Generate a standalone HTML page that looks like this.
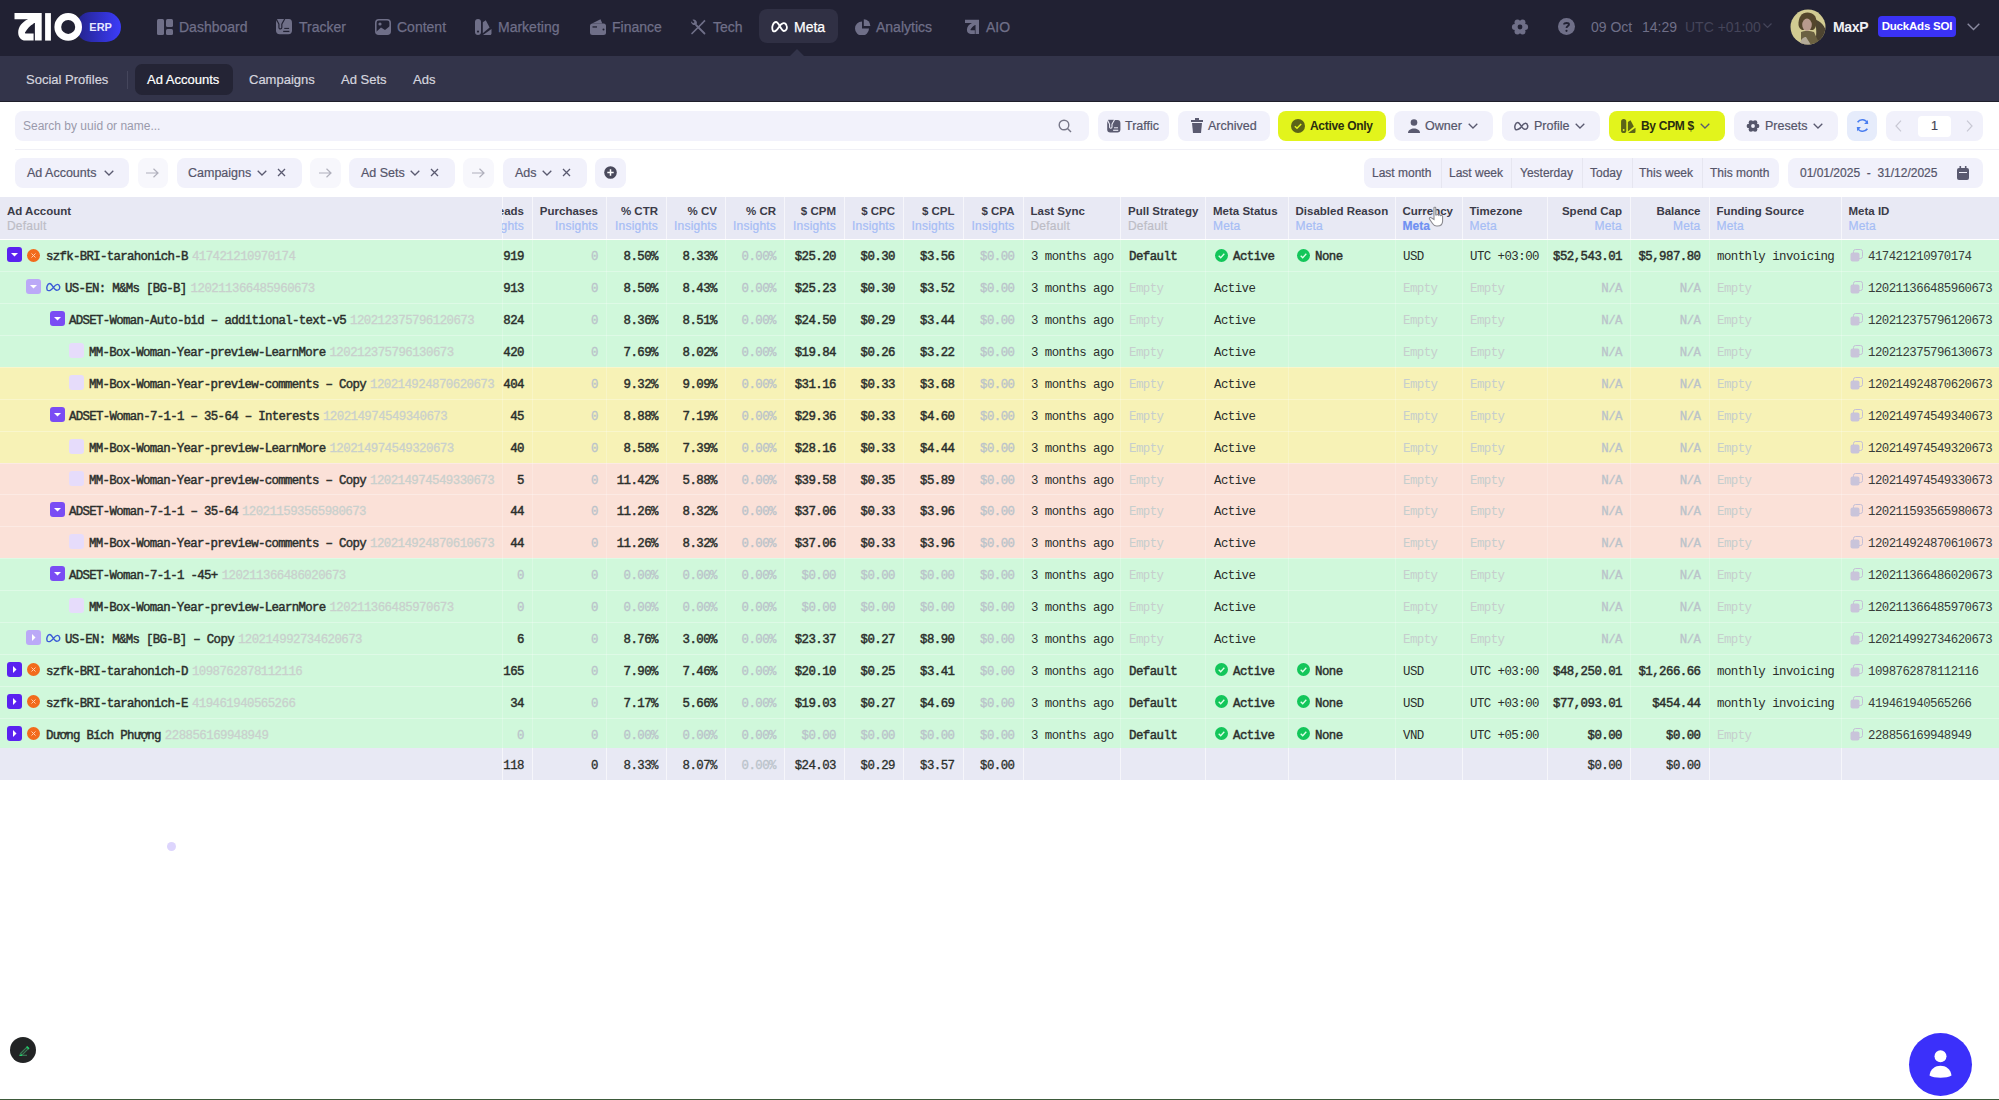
<!DOCTYPE html>
<html><head><meta charset="utf-8"><style>
*{box-sizing:border-box;margin:0;padding:0}
html,body{width:1999px;height:1100px;overflow:hidden;background:#ffffff;font-family:"Liberation Sans",sans-serif;position:relative}
.abs{position:absolute}
#top{left:0;top:0;width:1999px;height:56px;background:#212133}
#sub{left:0;top:56px;width:1999px;height:46px;background:#33344a}
.nav{position:absolute;top:0;height:56px;display:flex;align-items:center;color:#6f6f88;font-size:14px;white-space:nowrap}
.nav svg{position:absolute}
.subi{position:absolute;top:56px;height:46px;line-height:46px;color:#d7d7e2;font-size:13.5px;white-space:nowrap}
.btn{position:absolute;top:111px;height:30px;border-radius:8px;background:#f1f1fb;color:#55556a;font-size:12.5px;white-space:nowrap;line-height:30px}
.chip{position:absolute;top:158px;height:30px;border-radius:8px;background:#f1f1fb;color:#55556a;font-size:12.5px;white-space:nowrap;line-height:30px}
.t{position:absolute;white-space:nowrap}
.hdr{position:absolute;top:197px;height:42px;background:#e8e9f4}
.hl{position:absolute;top:197px;width:1px;height:42px;background:#f6f6fb}
.ht{position:absolute;top:204px;font-size:11.5px;line-height:14px;font-weight:bold;color:#3b3b48;white-space:nowrap}
.hs{position:absolute;top:219px;font-size:12px;line-height:14px;letter-spacing:0.2px;color:#a6bdf5;-webkit-text-stroke:0.2px #a6bdf5;white-space:nowrap}
.hs.g{color:#bdbdc6;-webkit-text-stroke:0.2px #bdbdc6}
.hs.hv{color:#6f90f2;-webkit-text-stroke:0.2px #6f90f2;font-weight:bold;letter-spacing:0}
.row{position:absolute;left:0;width:1999px}
.c{position:absolute;font-family:"Liberation Mono",monospace;font-size:12.4px;letter-spacing:-0.54px;white-space:nowrap;color:#2b2f2c}
.b{-webkit-text-stroke:0.45px #2b2f2c}
.m{-webkit-text-stroke:0.3px #2b2f2c}
.gr{color:#bac3ca;-webkit-text-stroke:0.3px #bac3ca}
.em{color:#c6cecd}
.vl{position:absolute;width:1px}
</style></head><body>
<div class="abs" id="top"></div>
<div class="abs" id="sub"></div>
<div class="abs" style="left:0;top:101px;width:1999px;height:1px;background:#1f1f2b"></div>
<svg class="abs" style="left:10px;top:8px" width="115" height="40" viewBox="0 0 115 40">
<defs><linearGradient id="erp" x1="0" x2="1"><stop offset="0" stop-color="#23238a"/><stop offset="1" stop-color="#3c3cfa"/></linearGradient></defs>
<rect x="66" y="4" width="45" height="30" rx="15" fill="url(#erp)"/>
<text x="79.3" y="22.8" font-family="Liberation Sans" font-weight="bold" font-size="11" fill="#e6e6ff">ERP</text>
<path d="M4.5 5.1 H31.7 V32.6 H24.9 V15 H23.6 V15.7 C20 17.5 17.5 20.3 15 24.6 C14.8 25.1 15.2 25.6 16 25.6 H23.6 V32.6 H15.5 C11 32.6 8.2 29 8.2 24.5 C8.2 19 12 14 18.1 11.3 H4.5 Z" fill="#fff"/>
<rect x="35.1" y="5.1" width="5.8" height="27.5" fill="#fff"/>
<circle cx="58.2" cy="18.9" r="10.4" fill="none" stroke="#fff" stroke-width="6.8"/>
</svg>
<svg class="abs" style="left:157px;top:19px" width="18" height="16" viewBox="0 0 18 16" fill="#6f6f88"><rect x="0" y="0" width="7" height="16" rx="1.5"/><rect x="9" y="0" width="7" height="8" rx="1.5"/><rect x="9" y="10" width="7" height="6" rx="1.5"/></svg>
<div class="t" style="left:179px;top:19px;font-size:14px;line-height:16px;color:#6f6f88;-webkit-text-stroke:0.25px #6f6f88">Dashboard</div>
<svg class="abs" style="left:276px;top:19px" width="18" height="16" viewBox="0 0 18 16" fill="#6f6f88"><g transform="translate(0 -1.2) scale(0.97)"><rect x="0" y="1.2" width="16.5" height="15.8" rx="3.8"/><path d="M0.2 0.2 H9.2 C9.2 1.8 6.8 4.2 6 6.6 V10 C6 10.9 5.2 11.5 4.5 11.5 C3.7 11.5 3 10.9 3 10 V6.6 C2.4 4.6 0.2 2.2 0.2 0.2Z" stroke="#212133" stroke-width="1.2"/><rect x="8.5" y="10.4" width="5" height="1.1" fill="#212133"/><rect x="7.4" y="13.4" width="6.4" height="1.3" fill="#212133"/></g></svg>
<div class="t" style="left:299px;top:19px;font-size:14px;line-height:16px;color:#6f6f88;-webkit-text-stroke:0.25px #6f6f88">Tracker</div>
<svg class="abs" style="left:375px;top:19px" width="18" height="16" viewBox="0 0 18 16" fill="#6f6f88"><rect x="0.8" y="0.8" width="14.4" height="14.4" rx="3" fill="none" stroke="#6f6f88" stroke-width="1.6"/><circle cx="5" cy="5" r="1.6"/><path d="M1 13 L6 8.5 L10 11 L15 7 V15 H1Z"/></svg>
<div class="t" style="left:397px;top:19px;font-size:14px;line-height:16px;color:#6f6f88;-webkit-text-stroke:0.25px #6f6f88">Content</div>
<svg class="abs" style="left:475px;top:19px" width="18" height="16" viewBox="0 0 18 16" fill="#6f6f88"><rect x="0" y="0" width="6" height="16" rx="3"/><circle cx="3" cy="12.6" r="1.1" fill="#212133"/><path d="M7.8 3.3 L10.8 1.3 L14.6 8.6 L7.8 14.2Z"/><path d="M8 16 L16.5 10 V14.5 C16.5 15.4 15.9 16 15 16Z"/></svg>
<div class="t" style="left:498px;top:19px;font-size:14px;line-height:16px;color:#6f6f88;-webkit-text-stroke:0.25px #6f6f88">Marketing</div>
<svg class="abs" style="left:590px;top:19px" width="18" height="16" viewBox="0 0 18 16" fill="#6f6f88"><rect x="0" y="4.5" width="16" height="11.5" rx="2.5"/><path d="M2 4.5 L10.5 0.3 L12.3 4.5Z"/><rect x="2.5" y="7.3" width="4.5" height="1.3" fill="#212133"/><circle cx="13.5" cy="10.5" r="1" fill="#212133"/></svg>
<div class="t" style="left:612px;top:19px;font-size:14px;line-height:16px;color:#6f6f88;-webkit-text-stroke:0.25px #6f6f88">Finance</div>
<svg class="abs" style="left:690px;top:19px" width="18" height="16" viewBox="0 0 18 16" fill="#6f6f88"><path d="M2 14.5 L12.5 4" stroke="#6f6f88" stroke-width="1.7" stroke-linecap="round"/><path d="M11.3 4.3 L14.3 0.8 L15.6 2.1 L12.2 5.2Z"/><path d="M14.5 14.5 L6 6" stroke="#6f6f88" stroke-width="1.8" stroke-linecap="round"/><path d="M6.8 5 A3.4 3.4 0 0 1 1 2.2 L3.2 4.3 L4.6 3 L2.4 0.8 A3.4 3.4 0 0 1 6.8 5Z"/></svg>
<div class="t" style="left:713px;top:19px;font-size:14px;line-height:16px;color:#6f6f88;-webkit-text-stroke:0.25px #6f6f88">Tech</div>
<div class="abs" style="left:759px;top:9px;width:79px;height:34px;border-radius:8px;background:#303044"></div>
<svg class="abs" style="left:789px;top:49px" width="16" height="8"><path d="M0 8 L8 0 L16 8Z" fill="#33344a"/></svg>
<svg class="abs" style="left:771px;top:19px" width="18" height="16" viewBox="0 0 18 16" fill="#ffffff"><path d="M2 12 C0 8 2.5 3 5 3 C8 3 10 12 13 12 C15.5 12 16.5 9 15.5 6.5 C14.5 3 11 3 8 8 C5.5 12 3.5 13 2 12Z" fill="none" stroke="#fff" stroke-width="1.8"/></svg>
<div class="t" style="left:794px;top:19px;font-size:14px;line-height:16px;color:#ffffff;-webkit-text-stroke:0.25px #ffffff">Meta</div>
<svg class="abs" style="left:855px;top:19px" width="18" height="16" viewBox="0 0 18 16" fill="#6f6f88"><path d="M7 2.5 A7 7 0 1 0 14 9.5 H7Z"/><path d="M8.8 0.3 A6.6 6.6 0 0 1 15.4 6.9 H8.8Z"/></svg>
<div class="t" style="left:876px;top:19px;font-size:14px;line-height:16px;color:#6f6f88;-webkit-text-stroke:0.25px #6f6f88">Analytics</div>
<svg class="abs" style="left:965px;top:19px" width="18" height="16" viewBox="0 0 18 16" fill="#6f6f88"><g transform="translate(0 0.8) scale(0.515) translate(-4.5 -5.1)"><path d="M4.5 5.1 H31.7 V32.6 H24.9 V15 H23.6 V15.7 C20 17.5 17.5 20.3 15 24.6 C14.8 25.1 15.2 25.6 16 25.6 H23.6 V32.6 H15.5 C11 32.6 8.2 29 8.2 24.5 C8.2 19 12 14 18.1 11.3 H4.5 Z"/></g></svg>
<div class="t" style="left:986px;top:19px;font-size:14px;line-height:16px;color:#6f6f88;-webkit-text-stroke:0.25px #6f6f88">AIO</div>
<svg class="abs" style="left:1511px;top:18px" width="18" height="18"><circle cx="9" cy="9" r="5.6" fill="#6f6f88"/><circle cx="14.20" cy="9.00" r="2.9" fill="#6f6f88"/><circle cx="11.60" cy="4.50" r="2.9" fill="#6f6f88"/><circle cx="6.40" cy="4.50" r="2.9" fill="#6f6f88"/><circle cx="3.80" cy="9.00" r="2.9" fill="#6f6f88"/><circle cx="6.40" cy="13.50" r="2.9" fill="#6f6f88"/><circle cx="11.60" cy="13.50" r="2.9" fill="#6f6f88"/><circle cx="9" cy="9" r="2.4" fill="#212133"/></svg>
<svg class="abs" style="left:1558px;top:18px" width="17" height="17" viewBox="0 0 17 17"><circle cx="8.5" cy="8.5" r="8.5" fill="#6f6f88"/><path d="M6 6.5 C6 4.5 11 4.5 11 6.5 C11 8 8.5 8 8.5 10" stroke="#212133" stroke-width="1.8" fill="none"/><circle cx="8.5" cy="12.8" r="1.1" fill="#212133"/></svg>
<div class="t" style="left:1591px;top:19px;font-size:14px;line-height:16px;color:#6f6f88">09 Oct</div>
<div class="t" style="left:1642px;top:19px;font-size:14px;line-height:16px;color:#6f6f88">14:29</div>
<div class="t" style="left:1685px;top:19px;font-size:14px;line-height:16px;color:#45455a">UTC +01:00</div>
<svg class="abs" style="left:1763px;top:23px" width="9" height="6"><path d="M0.5 0.5 L4.5 4.5 L8.5 0.5" stroke="#45455a" stroke-width="1.2" fill="none"/></svg>
<svg class="abs" style="left:1790px;top:9px" width="36" height="36" viewBox="0 0 36 36">
<defs><clipPath id="avc"><circle cx="18" cy="18" r="17.5"/></clipPath></defs>
<g clip-path="url(#avc)">
<rect width="36" height="36" fill="#d2cb92"/>
<path d="M0 22 C3 30 8 36 16 36 H0Z" fill="#bdb6a2"/>
<path d="M24 10 C31 12 36 18 36 24 V36 H24 C27 28 27 18 24 10Z" fill="#4d4431"/>
<path d="M8.5 16 C8 8 12 3.5 17.5 3.5 C23 3.5 26.5 7 26.5 13 C26.5 17 25 20 23 21 L12 21 C10 20 8.8 18 8.5 16Z" fill="#54462c"/>
<ellipse cx="17" cy="15.8" rx="4.8" ry="6.2" fill="#b89a8e"/>
<path d="M11 23 C13 21.5 21 21.5 24 23 L30 36 H11Z" fill="#6b6142"/>
<path d="M9 36 C11 30 13 28 16 28 L21 36Z" fill="#b3aa98"/>
</g></svg>
<div class="t" style="left:1833px;top:19px;font-size:14px;line-height:16px;color:#f0f0f5;font-weight:bold;letter-spacing:-0.3px">MaxP</div>
<div class="t" style="left:1878px;top:16px;width:78px;height:21px;border-radius:4px;background:#3a32f5;color:#fff;font-size:11.5px;font-weight:bold;line-height:21px;text-align:center;letter-spacing:-0.2px">DuckAds SOI</div>
<svg class="abs" style="left:1967px;top:23px" width="13" height="8"><path d="M0.7 0.7 L6.5 6.5 L12.3 0.7" stroke="#8a8aa0" stroke-width="1.4" fill="none"/></svg>
<div class="abs" style="left:135px;top:64px;width:98px;height:31px;border-radius:7px;background:#242435"></div>
<div class="abs" style="left:127px;top:71px;width:1px;height:18px;background:#45465c"></div>
<div class="t" style="left:26px;top:72px;font-size:13px;line-height:16px;color:#d5d5df;-webkit-text-stroke:0.2px #d5d5df">Social Profiles</div>
<div class="t" style="left:147px;top:72px;font-size:13px;line-height:16px;color:#ffffff;-webkit-text-stroke:0.2px #ffffff">Ad Accounts</div>
<div class="t" style="left:249px;top:72px;font-size:13px;line-height:16px;color:#d5d5df;-webkit-text-stroke:0.2px #d5d5df">Campaigns</div>
<div class="t" style="left:341px;top:72px;font-size:13px;line-height:16px;color:#d5d5df;-webkit-text-stroke:0.2px #d5d5df">Ad Sets</div>
<div class="t" style="left:413px;top:72px;font-size:13px;line-height:16px;color:#d5d5df;-webkit-text-stroke:0.2px #d5d5df">Ads</div>
<div class="abs" style="left:15px;top:111px;width:1074px;height:30px;border-radius:8px;background:#f2f2fb"></div>
<div class="t" style="left:23px;top:119px;font-size:12px;line-height:14px;color:#9a9aab">Search by uuid or name...</div>
<svg class="abs" style="left:1058px;top:119px" width="14" height="14"><circle cx="6" cy="6" r="4.8" stroke="#777788" stroke-width="1.4" fill="none"/><path d="M9.5 9.5 L13 13" stroke="#777788" stroke-width="1.4"/></svg>
<div class="abs" style="left:15px;top:149px;width:1984px;height:1px;background:#f0f0f6"></div>
<div class="abs" style="left:1098px;top:111px;width:71px;height:30px;border-radius:8px;background:#f1f1fb"></div>
<div class="abs" style="left:1178px;top:111px;width:92px;height:30px;border-radius:8px;background:#f1f1fb"></div>
<div class="abs" style="left:1278px;top:111px;width:108px;height:30px;border-radius:8px;background:#e2f41c"></div>
<div class="abs" style="left:1394px;top:111px;width:99px;height:30px;border-radius:8px;background:#f1f1fb"></div>
<div class="abs" style="left:1502px;top:111px;width:98px;height:30px;border-radius:8px;background:#f1f1fb"></div>
<div class="abs" style="left:1609px;top:111px;width:116px;height:30px;border-radius:8px;background:#e2f41c"></div>
<div class="abs" style="left:1734px;top:111px;width:104px;height:30px;border-radius:8px;background:#f1f1fb"></div>
<div class="abs" style="left:1847px;top:111px;width:30px;height:30px;border-radius:8px;background:#e6ecfb"></div>
<div class="abs" style="left:1886px;top:111px;width:97px;height:30px;border-radius:8px;background:#f1f1fb"></div>
<div class="abs" style="left:1918px;top:116px;width:33px;height:21px;border-radius:4px;background:#ffffff"></div>
<div class="t" style="left:1125px;top:119px;font-size:12.5px;line-height:14px;color:#55556a;-webkit-text-stroke:0.2px #55556a;">Traffic</div>
<div class="t" style="left:1208px;top:119px;font-size:12.5px;line-height:14px;color:#55556a;-webkit-text-stroke:0.2px #55556a;">Archived</div>
<div class="t" style="left:1310px;top:119px;font-size:12px;line-height:14px;color:#2a2e10;font-weight:bold;letter-spacing:-0.3px">Active Only</div>
<div class="t" style="left:1425px;top:119px;font-size:12.5px;line-height:14px;color:#55556a;-webkit-text-stroke:0.2px #55556a;">Owner</div>
<div class="t" style="left:1534px;top:119px;font-size:12.5px;line-height:14px;color:#55556a;-webkit-text-stroke:0.2px #55556a;">Profile</div>
<div class="t" style="left:1641px;top:119px;font-size:12px;line-height:14px;color:#2a2e10;font-weight:bold;letter-spacing:-0.3px">By CPM $</div>
<div class="t" style="left:1765px;top:119px;font-size:12.5px;line-height:14px;color:#55556a;-webkit-text-stroke:0.2px #55556a;">Presets</div>
<div class="t" style="left:1931px;top:119px;font-size:12.5px;line-height:14px;color:#444455;-webkit-text-stroke:0.2px #444455;">1</div>
<svg class="abs" style="left:1107px;top:119px" width="14" height="14" viewBox="0 0 17 17.5" fill="#5a5a70"><rect x="0" y="1.2" width="16.5" height="15.8" rx="3.8"/><path d="M0.2 0.2 H9.2 C9.2 1.8 6.8 4.2 6 6.6 V10 C6 10.9 5.2 11.5 4.5 11.5 C3.7 11.5 3 10.9 3 10 V6.6 C2.4 4.6 0.2 2.2 0.2 0.2Z" stroke="#f1f1fb" stroke-width="1.3"/><rect x="8.5" y="10.4" width="5" height="1.2" fill="#f1f1fb"/><rect x="7.4" y="13.4" width="6.4" height="1.4" fill="#f1f1fb"/></svg>
<svg class="abs" style="left:1191px;top:118px" width="12" height="15" viewBox="0 0 12 15" fill="#5a5a70"><rect x="0" y="2" width="12" height="2"/><rect x="4" y="0" width="4" height="2"/><path d="M1 5 H11 L10 15 H2Z"/></svg>
<svg class="abs" style="left:1291px;top:119px" width="14" height="14" viewBox="0 0 14 14"><circle cx="7" cy="7" r="7" fill="#5b6418"/><path d="M3.8 7.2 L6 9.3 L10.2 5" stroke="#e2f41c" stroke-width="1.5" fill="none"/></svg>
<svg class="abs" style="left:1408px;top:119px" width="12" height="14" viewBox="0 0 12 14" fill="#5a5a70"><circle cx="6" cy="3.5" r="3.3"/><path d="M0 14 C0 8 12 8 12 14Z"/></svg>
<svg class="abs" style="left:1514px;top:121px" width="15" height="10" viewBox="0 0 16 10"><path d="M1.5 8.5 C0 6 1.5 1.3 4 1.3 C6.5 1.3 8.5 8.5 11.5 8.5 C14 8.5 15 6.5 14.5 4.5 C14 1.5 11 1 8 5.5 C6 8.5 3 9.5 1.5 8.5Z" fill="none" stroke="#5a5a70" stroke-width="1.6"/></svg>
<svg class="abs" style="left:1621px;top:119px" width="15" height="14" viewBox="0 0 17 16" fill="#5b6418"><rect x="0" y="0" width="6" height="16" rx="3"/><circle cx="3" cy="12.6" r="1.1" fill="#e2f41c"/><path d="M7.8 3.3 L10.8 1.3 L14.6 8.6 L7.8 14.2Z"/><path d="M8 16 L16.5 10 V14.5 C16.5 15.4 15.9 16 15 16Z"/></svg>
<svg class="abs" style="left:1746px;top:119px" width="14" height="14"><circle cx="7" cy="7" r="4.4" fill="#55566a"/><circle cx="11.10" cy="7.00" r="2.3" fill="#55566a"/><circle cx="9.05" cy="3.45" r="2.3" fill="#55566a"/><circle cx="4.95" cy="3.45" r="2.3" fill="#55566a"/><circle cx="2.90" cy="7.00" r="2.3" fill="#55566a"/><circle cx="4.95" cy="10.55" r="2.3" fill="#55566a"/><circle cx="9.05" cy="10.55" r="2.3" fill="#55566a"/><circle cx="7" cy="7" r="1.9" fill="#f1f1fb"/></svg>
<svg class="abs" style="left:1468px;top:123px" width="10" height="7"><path d="M0.7 0.7 L5 5 L9.3 0.7" stroke="#5a5a70" stroke-width="1.3" fill="none"/></svg>
<svg class="abs" style="left:1575px;top:123px" width="10" height="7"><path d="M0.7 0.7 L5 5 L9.3 0.7" stroke="#5a5a70" stroke-width="1.3" fill="none"/></svg>
<svg class="abs" style="left:1700px;top:123px" width="10" height="7"><path d="M0.7 0.7 L5 5 L9.3 0.7" stroke="#5a5a70" stroke-width="1.3" fill="none"/></svg>
<svg class="abs" style="left:1813px;top:123px" width="10" height="7"><path d="M0.7 0.7 L5 5 L9.3 0.7" stroke="#5a5a70" stroke-width="1.3" fill="none"/></svg>
<svg class="abs" style="left:1855px;top:118px" width="15" height="15" viewBox="0 0 16 16"><path d="M13.5 6 A6 6 0 0 0 2.8 4.5 M2.5 10 A6 6 0 0 0 13.2 11.5" stroke="#4a7ef0" stroke-width="1.7" fill="none"/><path d="M13.8 2 V6.3 H9.7Z M2.2 14 V9.7 H6.3Z" fill="#4a7ef0"/></svg>
<svg class="abs" style="left:1895px;top:120px" width="7" height="12"><path d="M6 0.7 L1 6 L6 11.3" stroke="#c8c8d4" stroke-width="1.2" fill="none"/></svg>
<svg class="abs" style="left:1966px;top:120px" width="7" height="12"><path d="M1 0.7 L6 6 L1 11.3" stroke="#c8c8d4" stroke-width="1.2" fill="none"/></svg>
<div class="abs" style="left:15px;top:158px;width:114px;height:30px;border-radius:8px;background:#f1f1fb"></div>
<div class="abs" style="left:138px;top:158px;width:30px;height:30px;border-radius:8px;background:#f7f7fc"></div>
<div class="abs" style="left:177px;top:158px;width:125px;height:30px;border-radius:8px;background:#f1f1fb"></div>
<div class="abs" style="left:310px;top:158px;width:31px;height:30px;border-radius:8px;background:#f7f7fc"></div>
<div class="abs" style="left:349px;top:158px;width:106px;height:30px;border-radius:8px;background:#f1f1fb"></div>
<div class="abs" style="left:463px;top:158px;width:31px;height:30px;border-radius:8px;background:#f7f7fc"></div>
<div class="abs" style="left:503px;top:158px;width:84px;height:30px;border-radius:8px;background:#f1f1fb"></div>
<div class="abs" style="left:595px;top:158px;width:31px;height:30px;border-radius:8px;background:#f1f1fb"></div>
<div class="t" style="left:27px;top:166px;font-size:12.5px;line-height:14px;color:#55556a;-webkit-text-stroke:0.2px #55556a;">Ad Accounts</div>
<div class="t" style="left:188px;top:166px;font-size:12.5px;line-height:14px;color:#55556a;-webkit-text-stroke:0.2px #55556a;">Campaigns</div>
<div class="t" style="left:361px;top:166px;font-size:12.5px;line-height:14px;color:#55556a;-webkit-text-stroke:0.2px #55556a;">Ad Sets</div>
<div class="t" style="left:515px;top:166px;font-size:12.5px;line-height:14px;color:#55556a;-webkit-text-stroke:0.2px #55556a;">Ads</div>
<svg class="abs" style="left:104px;top:170px" width="10" height="7"><path d="M0.7 0.7 L5 5 L9.3 0.7" stroke="#5a5a70" stroke-width="1.3" fill="none"/></svg>
<svg class="abs" style="left:257px;top:170px" width="10" height="7"><path d="M0.7 0.7 L5 5 L9.3 0.7" stroke="#5a5a70" stroke-width="1.3" fill="none"/></svg>
<svg class="abs" style="left:410px;top:170px" width="10" height="7"><path d="M0.7 0.7 L5 5 L9.3 0.7" stroke="#5a5a70" stroke-width="1.3" fill="none"/></svg>
<svg class="abs" style="left:542px;top:170px" width="10" height="7"><path d="M0.7 0.7 L5 5 L9.3 0.7" stroke="#5a5a70" stroke-width="1.3" fill="none"/></svg>
<svg class="abs" style="left:277px;top:168px" width="9" height="9"><path d="M1 1 L8 8 M8 1 L1 8" stroke="#5a5a70" stroke-width="1.3"/></svg>
<svg class="abs" style="left:430px;top:168px" width="9" height="9"><path d="M1 1 L8 8 M8 1 L1 8" stroke="#5a5a70" stroke-width="1.3"/></svg>
<svg class="abs" style="left:562px;top:168px" width="9" height="9"><path d="M1 1 L8 8 M8 1 L1 8" stroke="#5a5a70" stroke-width="1.3"/></svg>
<svg class="abs" style="left:146px;top:168px" width="13" height="10"><path d="M0 5 H12 M7.5 0.8 L12 5 L7.5 9.2" stroke="#b0b0bc" stroke-width="1.2" fill="none"/></svg>
<svg class="abs" style="left:319px;top:168px" width="13" height="10"><path d="M0 5 H12 M7.5 0.8 L12 5 L7.5 9.2" stroke="#b0b0bc" stroke-width="1.2" fill="none"/></svg>
<svg class="abs" style="left:472px;top:168px" width="13" height="10"><path d="M0 5 H12 M7.5 0.8 L12 5 L7.5 9.2" stroke="#b0b0bc" stroke-width="1.2" fill="none"/></svg>
<svg class="abs" style="left:604px;top:166px" width="13" height="13"><circle cx="6.5" cy="6.5" r="6.3" fill="#4a4a5c"/><path d="M6.5 3.3 V9.7 M3.3 6.5 H9.7" stroke="#fff" stroke-width="1.5"/></svg>
<div class="abs" style="left:1364px;top:158px;width:415px;height:30px;border-radius:8px;background:#f1f1fb"></div>
<div class="abs" style="left:1441px;top:158px;width:1px;height:30px;background:#e6e6f0"></div>
<div class="abs" style="left:1511px;top:158px;width:1px;height:30px;background:#e6e6f0"></div>
<div class="abs" style="left:1582px;top:158px;width:1px;height:30px;background:#e6e6f0"></div>
<div class="abs" style="left:1632px;top:158px;width:1px;height:30px;background:#e6e6f0"></div>
<div class="abs" style="left:1702px;top:158px;width:1px;height:30px;background:#e6e6f0"></div>
<div class="t" style="left:1372px;top:166px;font-size:12px;line-height:14px;color:#55556a;-webkit-text-stroke:0.2px #55556a;">Last month</div>
<div class="t" style="left:1449px;top:166px;font-size:12px;line-height:14px;color:#55556a;-webkit-text-stroke:0.2px #55556a;">Last week</div>
<div class="t" style="left:1520px;top:166px;font-size:12px;line-height:14px;color:#55556a;-webkit-text-stroke:0.2px #55556a;">Yesterday</div>
<div class="t" style="left:1590px;top:166px;font-size:12px;line-height:14px;color:#55556a;-webkit-text-stroke:0.2px #55556a;">Today</div>
<div class="t" style="left:1639px;top:166px;font-size:12px;line-height:14px;color:#55556a;-webkit-text-stroke:0.2px #55556a;">This week</div>
<div class="t" style="left:1710px;top:166px;font-size:12px;line-height:14px;color:#55556a;-webkit-text-stroke:0.2px #55556a;">This month</div>
<div class="abs" style="left:1788px;top:158px;width:195px;height:30px;border-radius:8px;background:#f1f1fb"></div>
<div class="t" style="left:1800px;top:166px;font-size:12px;line-height:14px;color:#55556a;-webkit-text-stroke:0.2px #55556a;white-space:pre">01/01/2025  -  31/12/2025</div>
<svg class="abs" style="left:1957px;top:166px" width="12" height="14" viewBox="0 0 12 14" fill="#5a5a70"><rect x="0" y="2" width="12" height="12" rx="2"/><rect x="2.5" y="0" width="1.6" height="3"/><rect x="7.9" y="0" width="1.6" height="3"/><rect x="2" y="6" width="8" height="1" fill="#f1f1fb"/></svg>
<div class="hdr" style="left:0;width:1999px"></div>
<div class="ht" style="left:7px">Ad Account</div>
<div class="hs g" style="left:7px">Default</div>
<div class="hl" style="left:501.5px"></div>
<div class="abs" style="left:502px;top:197px;width:30px;height:42px;overflow:hidden"><div class="ht" style="right:8px;top:7px">Leads</div><div class="hs" style="right:8px;top:22px">Insights</div></div>
<div class="hl" style="left:532px"></div>
<div class="ht" style="right:1401px">Purchases</div>
<div class="hs" style="right:1401px">Insights</div>
<div class="hl" style="left:606px"></div>
<div class="ht" style="right:1341px">% CTR</div>
<div class="hs" style="right:1341px">Insights</div>
<div class="hl" style="left:666px"></div>
<div class="ht" style="right:1282px">% CV</div>
<div class="hs" style="right:1282px">Insights</div>
<div class="hl" style="left:725px"></div>
<div class="ht" style="right:1223px">% CR</div>
<div class="hs" style="right:1223px">Insights</div>
<div class="hl" style="left:784px"></div>
<div class="ht" style="right:1163px">$ CPM</div>
<div class="hs" style="right:1163px">Insights</div>
<div class="hl" style="left:844px"></div>
<div class="ht" style="right:1104px">$ CPC</div>
<div class="hs" style="right:1104px">Insights</div>
<div class="hl" style="left:903px"></div>
<div class="ht" style="right:1044.5px">$ CPL</div>
<div class="hs" style="right:1044.5px">Insights</div>
<div class="hl" style="left:962.5px"></div>
<div class="ht" style="right:984.5px">$ CPA</div>
<div class="hs" style="right:984.5px">Insights</div>
<div class="hl" style="left:1022.5px"></div>
<div class="ht" style="left:1030.5px">Last Sync</div>
<div class="hs g" style="left:1030.5px">Default</div>
<div class="hl" style="left:1120px"></div>
<div class="ht" style="left:1128px">Pull Strategy</div>
<div class="hs g" style="left:1128px">Default</div>
<div class="hl" style="left:1205px"></div>
<div class="ht" style="left:1213px">Meta Status</div>
<div class="hs" style="left:1213px">Meta</div>
<div class="hl" style="left:1287.5px"></div>
<div class="ht" style="left:1295.5px">Disabled Reason</div>
<div class="hs" style="left:1295.5px">Meta</div>
<div class="hl" style="left:1394.5px"></div>
<div class="ht" style="left:1402.5px">Currency</div>
<div class="hs hv" style="left:1402.5px">Meta</div>
<div class="hl" style="left:1461.5px"></div>
<div class="ht" style="left:1469.5px">Timezone</div>
<div class="hs" style="left:1469.5px">Meta</div>
<div class="hl" style="left:1546.5px"></div>
<div class="ht" style="right:377px">Spend Cap</div>
<div class="hs" style="right:377px">Meta</div>
<div class="hl" style="left:1630px"></div>
<div class="ht" style="right:298.5px">Balance</div>
<div class="hs" style="right:298.5px">Meta</div>
<div class="hl" style="left:1708.5px"></div>
<div class="ht" style="left:1716.5px">Funding Source</div>
<div class="hs" style="left:1716.5px">Meta</div>
<div class="hl" style="left:1840.5px"></div>
<div class="ht" style="left:1848.5px">Meta ID</div>
<div class="hs" style="left:1848.5px">Meta</div>
<div class="row" style="top:240px;height:31px;background:#d0f8db"></div>
<svg class="abs" style="left:7px;top:247.4px" width="15" height="15"><rect width="15" height="15" rx="3" fill="#5a22f0"/><path d="M4 6 H11 L7.5 9.5Z" fill="#fff"/></svg>
<svg class="abs" style="left:27px;top:248.9px" width="13" height="13"><circle cx="6.5" cy="6.5" r="6.5" fill="#f26b1c"/><path d="M4.5 4.5 L8.5 8.5 M8.5 4.5 L4.5 8.5" stroke="#ffd0b0" stroke-width="1"/></svg>
<div class="c b" style="left:46px;top:250.4px;line-height:15px"><span style="letter-spacing:-0.68px">szfk-BRI-tarahonich-B</span><span style="-webkit-text-stroke:0.3px #c9d0cd;color:#c9d0cd;margin-left:4px">417421210970174</span></div>
<div class="c b" style="right:1475.0px;top:250.4px;line-height:15px">919</div>
<div class="c gr" style="right:1401.0px;top:250.4px;line-height:15px">0</div>
<div class="c b" style="right:1341.0px;top:250.4px;line-height:15px">8.50%</div>
<div class="c b" style="right:1282.0px;top:250.4px;line-height:15px">8.33%</div>
<div class="c gr" style="right:1223.0px;top:250.4px;line-height:15px">0.00%</div>
<div class="c b" style="right:1163.0px;top:250.4px;line-height:15px">$25.20</div>
<div class="c b" style="right:1104.0px;top:250.4px;line-height:15px">$0.30</div>
<div class="c b" style="right:1044.5px;top:250.4px;line-height:15px">$3.56</div>
<div class="c gr" style="right:984.5px;top:250.4px;line-height:15px">$0.00</div>
<div class="c" style="left:1031px;top:250.4px;line-height:15px">3 months ago</div>
<div class="c b" style="left:1129px;top:250.4px;line-height:15px">Default</div>
<svg class="abs" style="left:1215px;top:248.9px" width="13" height="13"><circle cx="6.5" cy="6.5" r="6.5" fill="#13c65a"/><path d="M3.7 6.8 L5.7 8.7 L9.3 4.8" stroke="#e0ffe8" stroke-width="1.3" fill="none"/></svg>
<div class="c b" style="left:1233px;top:250.4px;line-height:15px">Active</div>
<svg class="abs" style="left:1297px;top:248.9px" width="13" height="13"><circle cx="6.5" cy="6.5" r="6.5" fill="#13c65a"/><path d="M3.7 6.8 L5.7 8.7 L9.3 4.8" stroke="#e0ffe8" stroke-width="1.3" fill="none"/></svg>
<div class="c b" style="left:1315px;top:250.4px;line-height:15px">None</div>
<div class="c" style="left:1403px;top:250.4px;line-height:15px">USD</div>
<div class="c" style="left:1470px;top:250.4px;line-height:15px">UTC +03:00</div>
<div class="c b" style="right:377px;top:250.4px;line-height:15px">$52,543.01</div>
<div class="c b" style="right:298.5px;top:250.4px;line-height:15px">$5,987.80</div>
<div class="c" style="left:1717px;top:250.4px;line-height:15px">monthly invoicing</div>
<svg class="abs" style="left:1850px;top:249.4px" width="13" height="13" viewBox="0 0 13 13"><rect x="3.5" y="0.5" width="9" height="9" rx="2" fill="none" stroke="#c4bfd6" stroke-width="1"/><rect x="0.5" y="3.5" width="9" height="9" rx="2" fill="#c9c4da"/></svg>
<div class="c" style="left:1868px;top:250.4px;line-height:15px;color:#383c3a">417421210970174</div>
<div class="row" style="top:271px;height:32px;background:#d0f8db"></div>
<svg class="abs" style="left:26px;top:279.3px" width="15" height="15"><rect width="15" height="15" rx="3" fill="#bba9f7"/><path d="M4 6 H11 L7.5 9.5Z" fill="#fff"/></svg>
<svg class="abs" style="left:46px;top:282.3px" width="15" height="10" viewBox="0 0 16 10"><path d="M1.5 8.5 C0 6 1.5 1.3 4 1.3 C6.5 1.3 8.5 8.5 11.5 8.5 C14 8.5 15 6.5 14.5 4.5 C14 1.5 11 1 8 5.5 C6 8.5 3 9.5 1.5 8.5Z" fill="none" stroke="#3a5ad6" stroke-width="1.5"/></svg>
<div class="c b" style="left:65px;top:282.3px;line-height:15px"><span style="letter-spacing:-0.68px">US-EN: M&amp;Ms [BG-B]</span><span style="-webkit-text-stroke:0.3px #c9d0cd;color:#c9d0cd;margin-left:4px">120211366485960673</span></div>
<div class="c b" style="right:1475.0px;top:282.3px;line-height:15px">913</div>
<div class="c gr" style="right:1401.0px;top:282.3px;line-height:15px">0</div>
<div class="c b" style="right:1341.0px;top:282.3px;line-height:15px">8.50%</div>
<div class="c b" style="right:1282.0px;top:282.3px;line-height:15px">8.43%</div>
<div class="c gr" style="right:1223.0px;top:282.3px;line-height:15px">0.00%</div>
<div class="c b" style="right:1163.0px;top:282.3px;line-height:15px">$25.23</div>
<div class="c b" style="right:1104.0px;top:282.3px;line-height:15px">$0.30</div>
<div class="c b" style="right:1044.5px;top:282.3px;line-height:15px">$3.52</div>
<div class="c gr" style="right:984.5px;top:282.3px;line-height:15px">$0.00</div>
<div class="c" style="left:1031px;top:282.3px;line-height:15px">3 months ago</div>
<div class="c em" style="left:1129px;top:282.3px;line-height:15px">Empty</div>
<div class="c" style="left:1214px;top:282.3px;line-height:15px">Active</div>
<div class="c em" style="left:1403px;top:282.3px;line-height:15px">Empty</div>
<div class="c em" style="left:1470px;top:282.3px;line-height:15px">Empty</div>
<div class="c gr" style="right:377px;top:282.3px;line-height:15px">N/A</div>
<div class="c gr" style="right:298.5px;top:282.3px;line-height:15px">N/A</div>
<div class="c em" style="left:1717px;top:282.3px;line-height:15px">Empty</div>
<svg class="abs" style="left:1850px;top:281.3px" width="13" height="13" viewBox="0 0 13 13"><rect x="3.5" y="0.5" width="9" height="9" rx="2" fill="none" stroke="#c4bfd6" stroke-width="1"/><rect x="0.5" y="3.5" width="9" height="9" rx="2" fill="#c9c4da"/></svg>
<div class="c" style="left:1868px;top:282.3px;line-height:15px;color:#383c3a">120211366485960673</div>
<div class="row" style="top:303px;height:32px;background:#d0f8db"></div>
<svg class="abs" style="left:50px;top:311.2px" width="15" height="15"><rect width="15" height="15" rx="3" fill="#7a4cf4"/><path d="M4 6 H11 L7.5 9.5Z" fill="#fff"/></svg>
<div class="c b" style="left:69px;top:314.2px;line-height:15px"><span style="letter-spacing:-0.68px">ADSET-Woman-Auto-bid – additional-text-v5</span><span style="-webkit-text-stroke:0.3px #c9d0cd;color:#c9d0cd;margin-left:4px">120212375796120673</span></div>
<div class="c b" style="right:1475.0px;top:314.2px;line-height:15px">824</div>
<div class="c gr" style="right:1401.0px;top:314.2px;line-height:15px">0</div>
<div class="c b" style="right:1341.0px;top:314.2px;line-height:15px">8.36%</div>
<div class="c b" style="right:1282.0px;top:314.2px;line-height:15px">8.51%</div>
<div class="c gr" style="right:1223.0px;top:314.2px;line-height:15px">0.00%</div>
<div class="c b" style="right:1163.0px;top:314.2px;line-height:15px">$24.50</div>
<div class="c b" style="right:1104.0px;top:314.2px;line-height:15px">$0.29</div>
<div class="c b" style="right:1044.5px;top:314.2px;line-height:15px">$3.44</div>
<div class="c gr" style="right:984.5px;top:314.2px;line-height:15px">$0.00</div>
<div class="c" style="left:1031px;top:314.2px;line-height:15px">3 months ago</div>
<div class="c em" style="left:1129px;top:314.2px;line-height:15px">Empty</div>
<div class="c" style="left:1214px;top:314.2px;line-height:15px">Active</div>
<div class="c em" style="left:1403px;top:314.2px;line-height:15px">Empty</div>
<div class="c em" style="left:1470px;top:314.2px;line-height:15px">Empty</div>
<div class="c gr" style="right:377px;top:314.2px;line-height:15px">N/A</div>
<div class="c gr" style="right:298.5px;top:314.2px;line-height:15px">N/A</div>
<div class="c em" style="left:1717px;top:314.2px;line-height:15px">Empty</div>
<svg class="abs" style="left:1850px;top:313.2px" width="13" height="13" viewBox="0 0 13 13"><rect x="3.5" y="0.5" width="9" height="9" rx="2" fill="none" stroke="#c4bfd6" stroke-width="1"/><rect x="0.5" y="3.5" width="9" height="9" rx="2" fill="#c9c4da"/></svg>
<div class="c" style="left:1868px;top:314.2px;line-height:15px;color:#383c3a">120212375796120673</div>
<div class="row" style="top:335px;height:32px;background:#d0f8db"></div>
<div class="abs" style="left:69px;top:343.0px;width:15px;height:15px;border-radius:3px;background:#e6dcfb"></div>
<div class="c b" style="left:89px;top:346.0px;line-height:15px"><span style="letter-spacing:-0.68px">MM-Box-Woman-Year-preview-LearnMore</span><span style="-webkit-text-stroke:0.3px #c9d0cd;color:#c9d0cd;margin-left:4px">120212375796130673</span></div>
<div class="c b" style="right:1475.0px;top:346.0px;line-height:15px">420</div>
<div class="c gr" style="right:1401.0px;top:346.0px;line-height:15px">0</div>
<div class="c b" style="right:1341.0px;top:346.0px;line-height:15px">7.69%</div>
<div class="c b" style="right:1282.0px;top:346.0px;line-height:15px">8.02%</div>
<div class="c gr" style="right:1223.0px;top:346.0px;line-height:15px">0.00%</div>
<div class="c b" style="right:1163.0px;top:346.0px;line-height:15px">$19.84</div>
<div class="c b" style="right:1104.0px;top:346.0px;line-height:15px">$0.26</div>
<div class="c b" style="right:1044.5px;top:346.0px;line-height:15px">$3.22</div>
<div class="c gr" style="right:984.5px;top:346.0px;line-height:15px">$0.00</div>
<div class="c" style="left:1031px;top:346.0px;line-height:15px">3 months ago</div>
<div class="c em" style="left:1129px;top:346.0px;line-height:15px">Empty</div>
<div class="c" style="left:1214px;top:346.0px;line-height:15px">Active</div>
<div class="c em" style="left:1403px;top:346.0px;line-height:15px">Empty</div>
<div class="c em" style="left:1470px;top:346.0px;line-height:15px">Empty</div>
<div class="c gr" style="right:377px;top:346.0px;line-height:15px">N/A</div>
<div class="c gr" style="right:298.5px;top:346.0px;line-height:15px">N/A</div>
<div class="c em" style="left:1717px;top:346.0px;line-height:15px">Empty</div>
<svg class="abs" style="left:1850px;top:345.0px" width="13" height="13" viewBox="0 0 13 13"><rect x="3.5" y="0.5" width="9" height="9" rx="2" fill="none" stroke="#c4bfd6" stroke-width="1"/><rect x="0.5" y="3.5" width="9" height="9" rx="2" fill="#c9c4da"/></svg>
<div class="c" style="left:1868px;top:346.0px;line-height:15px;color:#383c3a">120212375796130673</div>
<div class="row" style="top:367px;height:32px;background:#f7f2b6"></div>
<div class="abs" style="left:69px;top:374.9px;width:15px;height:15px;border-radius:3px;background:#e6dcfb"></div>
<div class="c b" style="left:89px;top:377.9px;line-height:15px"><span style="letter-spacing:-0.68px">MM-Box-Woman-Year-preview-comments – Copy</span><span style="-webkit-text-stroke:0.3px #c9d0cd;color:#c9d0cd;margin-left:4px">120214924870620673</span></div>
<div class="c b" style="right:1475.0px;top:377.9px;line-height:15px">404</div>
<div class="c gr" style="right:1401.0px;top:377.9px;line-height:15px">0</div>
<div class="c b" style="right:1341.0px;top:377.9px;line-height:15px">9.32%</div>
<div class="c b" style="right:1282.0px;top:377.9px;line-height:15px">9.09%</div>
<div class="c gr" style="right:1223.0px;top:377.9px;line-height:15px">0.00%</div>
<div class="c b" style="right:1163.0px;top:377.9px;line-height:15px">$31.16</div>
<div class="c b" style="right:1104.0px;top:377.9px;line-height:15px">$0.33</div>
<div class="c b" style="right:1044.5px;top:377.9px;line-height:15px">$3.68</div>
<div class="c gr" style="right:984.5px;top:377.9px;line-height:15px">$0.00</div>
<div class="c" style="left:1031px;top:377.9px;line-height:15px">3 months ago</div>
<div class="c em" style="left:1129px;top:377.9px;line-height:15px">Empty</div>
<div class="c" style="left:1214px;top:377.9px;line-height:15px">Active</div>
<div class="c em" style="left:1403px;top:377.9px;line-height:15px">Empty</div>
<div class="c em" style="left:1470px;top:377.9px;line-height:15px">Empty</div>
<div class="c gr" style="right:377px;top:377.9px;line-height:15px">N/A</div>
<div class="c gr" style="right:298.5px;top:377.9px;line-height:15px">N/A</div>
<div class="c em" style="left:1717px;top:377.9px;line-height:15px">Empty</div>
<svg class="abs" style="left:1850px;top:376.9px" width="13" height="13" viewBox="0 0 13 13"><rect x="3.5" y="0.5" width="9" height="9" rx="2" fill="none" stroke="#c4bfd6" stroke-width="1"/><rect x="0.5" y="3.5" width="9" height="9" rx="2" fill="#c9c4da"/></svg>
<div class="c" style="left:1868px;top:377.9px;line-height:15px;color:#383c3a">120214924870620673</div>
<div class="row" style="top:399px;height:32px;background:#f7f2b6"></div>
<svg class="abs" style="left:50px;top:406.8px" width="15" height="15"><rect width="15" height="15" rx="3" fill="#7a4cf4"/><path d="M4 6 H11 L7.5 9.5Z" fill="#fff"/></svg>
<div class="c b" style="left:69px;top:409.8px;line-height:15px"><span style="letter-spacing:-0.68px">ADSET-Woman-7-1-1 – 35-64 – Interests</span><span style="-webkit-text-stroke:0.3px #c9d0cd;color:#c9d0cd;margin-left:4px">120214974549340673</span></div>
<div class="c b" style="right:1475.0px;top:409.8px;line-height:15px">45</div>
<div class="c gr" style="right:1401.0px;top:409.8px;line-height:15px">0</div>
<div class="c b" style="right:1341.0px;top:409.8px;line-height:15px">8.88%</div>
<div class="c b" style="right:1282.0px;top:409.8px;line-height:15px">7.19%</div>
<div class="c gr" style="right:1223.0px;top:409.8px;line-height:15px">0.00%</div>
<div class="c b" style="right:1163.0px;top:409.8px;line-height:15px">$29.36</div>
<div class="c b" style="right:1104.0px;top:409.8px;line-height:15px">$0.33</div>
<div class="c b" style="right:1044.5px;top:409.8px;line-height:15px">$4.60</div>
<div class="c gr" style="right:984.5px;top:409.8px;line-height:15px">$0.00</div>
<div class="c" style="left:1031px;top:409.8px;line-height:15px">3 months ago</div>
<div class="c em" style="left:1129px;top:409.8px;line-height:15px">Empty</div>
<div class="c" style="left:1214px;top:409.8px;line-height:15px">Active</div>
<div class="c em" style="left:1403px;top:409.8px;line-height:15px">Empty</div>
<div class="c em" style="left:1470px;top:409.8px;line-height:15px">Empty</div>
<div class="c gr" style="right:377px;top:409.8px;line-height:15px">N/A</div>
<div class="c gr" style="right:298.5px;top:409.8px;line-height:15px">N/A</div>
<div class="c em" style="left:1717px;top:409.8px;line-height:15px">Empty</div>
<svg class="abs" style="left:1850px;top:408.8px" width="13" height="13" viewBox="0 0 13 13"><rect x="3.5" y="0.5" width="9" height="9" rx="2" fill="none" stroke="#c4bfd6" stroke-width="1"/><rect x="0.5" y="3.5" width="9" height="9" rx="2" fill="#c9c4da"/></svg>
<div class="c" style="left:1868px;top:409.8px;line-height:15px;color:#383c3a">120214974549340673</div>
<div class="row" style="top:431px;height:32px;background:#f7f2b6"></div>
<div class="abs" style="left:69px;top:438.7px;width:15px;height:15px;border-radius:3px;background:#e6dcfb"></div>
<div class="c b" style="left:89px;top:441.7px;line-height:15px"><span style="letter-spacing:-0.68px">MM-Box-Woman-Year-preview-LearnMore</span><span style="-webkit-text-stroke:0.3px #c9d0cd;color:#c9d0cd;margin-left:4px">120214974549320673</span></div>
<div class="c b" style="right:1475.0px;top:441.7px;line-height:15px">40</div>
<div class="c gr" style="right:1401.0px;top:441.7px;line-height:15px">0</div>
<div class="c b" style="right:1341.0px;top:441.7px;line-height:15px">8.58%</div>
<div class="c b" style="right:1282.0px;top:441.7px;line-height:15px">7.39%</div>
<div class="c gr" style="right:1223.0px;top:441.7px;line-height:15px">0.00%</div>
<div class="c b" style="right:1163.0px;top:441.7px;line-height:15px">$28.16</div>
<div class="c b" style="right:1104.0px;top:441.7px;line-height:15px">$0.33</div>
<div class="c b" style="right:1044.5px;top:441.7px;line-height:15px">$4.44</div>
<div class="c gr" style="right:984.5px;top:441.7px;line-height:15px">$0.00</div>
<div class="c" style="left:1031px;top:441.7px;line-height:15px">3 months ago</div>
<div class="c em" style="left:1129px;top:441.7px;line-height:15px">Empty</div>
<div class="c" style="left:1214px;top:441.7px;line-height:15px">Active</div>
<div class="c em" style="left:1403px;top:441.7px;line-height:15px">Empty</div>
<div class="c em" style="left:1470px;top:441.7px;line-height:15px">Empty</div>
<div class="c gr" style="right:377px;top:441.7px;line-height:15px">N/A</div>
<div class="c gr" style="right:298.5px;top:441.7px;line-height:15px">N/A</div>
<div class="c em" style="left:1717px;top:441.7px;line-height:15px">Empty</div>
<svg class="abs" style="left:1850px;top:440.7px" width="13" height="13" viewBox="0 0 13 13"><rect x="3.5" y="0.5" width="9" height="9" rx="2" fill="none" stroke="#c4bfd6" stroke-width="1"/><rect x="0.5" y="3.5" width="9" height="9" rx="2" fill="#c9c4da"/></svg>
<div class="c" style="left:1868px;top:441.7px;line-height:15px;color:#383c3a">120214974549320673</div>
<div class="row" style="top:463px;height:31px;background:#fbe1d8"></div>
<div class="abs" style="left:69px;top:470.5px;width:15px;height:15px;border-radius:3px;background:#e6dcfb"></div>
<div class="c b" style="left:89px;top:473.5px;line-height:15px"><span style="letter-spacing:-0.68px">MM-Box-Woman-Year-preview-comments – Copy</span><span style="-webkit-text-stroke:0.3px #c9d0cd;color:#c9d0cd;margin-left:4px">120214974549330673</span></div>
<div class="c b" style="right:1475.0px;top:473.5px;line-height:15px">5</div>
<div class="c gr" style="right:1401.0px;top:473.5px;line-height:15px">0</div>
<div class="c b" style="right:1341.0px;top:473.5px;line-height:15px">11.42%</div>
<div class="c b" style="right:1282.0px;top:473.5px;line-height:15px">5.88%</div>
<div class="c gr" style="right:1223.0px;top:473.5px;line-height:15px">0.00%</div>
<div class="c b" style="right:1163.0px;top:473.5px;line-height:15px">$39.58</div>
<div class="c b" style="right:1104.0px;top:473.5px;line-height:15px">$0.35</div>
<div class="c b" style="right:1044.5px;top:473.5px;line-height:15px">$5.89</div>
<div class="c gr" style="right:984.5px;top:473.5px;line-height:15px">$0.00</div>
<div class="c" style="left:1031px;top:473.5px;line-height:15px">3 months ago</div>
<div class="c em" style="left:1129px;top:473.5px;line-height:15px">Empty</div>
<div class="c" style="left:1214px;top:473.5px;line-height:15px">Active</div>
<div class="c em" style="left:1403px;top:473.5px;line-height:15px">Empty</div>
<div class="c em" style="left:1470px;top:473.5px;line-height:15px">Empty</div>
<div class="c gr" style="right:377px;top:473.5px;line-height:15px">N/A</div>
<div class="c gr" style="right:298.5px;top:473.5px;line-height:15px">N/A</div>
<div class="c em" style="left:1717px;top:473.5px;line-height:15px">Empty</div>
<svg class="abs" style="left:1850px;top:472.5px" width="13" height="13" viewBox="0 0 13 13"><rect x="3.5" y="0.5" width="9" height="9" rx="2" fill="none" stroke="#c4bfd6" stroke-width="1"/><rect x="0.5" y="3.5" width="9" height="9" rx="2" fill="#c9c4da"/></svg>
<div class="c" style="left:1868px;top:473.5px;line-height:15px;color:#383c3a">120214974549330673</div>
<div class="row" style="top:494px;height:32px;background:#fbe1d8"></div>
<svg class="abs" style="left:50px;top:502.4px" width="15" height="15"><rect width="15" height="15" rx="3" fill="#7a4cf4"/><path d="M4 6 H11 L7.5 9.5Z" fill="#fff"/></svg>
<div class="c b" style="left:69px;top:505.4px;line-height:15px"><span style="letter-spacing:-0.68px">ADSET-Woman-7-1-1 – 35-64</span><span style="-webkit-text-stroke:0.3px #c9d0cd;color:#c9d0cd;margin-left:4px">120211593565980673</span></div>
<div class="c b" style="right:1475.0px;top:505.4px;line-height:15px">44</div>
<div class="c gr" style="right:1401.0px;top:505.4px;line-height:15px">0</div>
<div class="c b" style="right:1341.0px;top:505.4px;line-height:15px">11.26%</div>
<div class="c b" style="right:1282.0px;top:505.4px;line-height:15px">8.32%</div>
<div class="c gr" style="right:1223.0px;top:505.4px;line-height:15px">0.00%</div>
<div class="c b" style="right:1163.0px;top:505.4px;line-height:15px">$37.06</div>
<div class="c b" style="right:1104.0px;top:505.4px;line-height:15px">$0.33</div>
<div class="c b" style="right:1044.5px;top:505.4px;line-height:15px">$3.96</div>
<div class="c gr" style="right:984.5px;top:505.4px;line-height:15px">$0.00</div>
<div class="c" style="left:1031px;top:505.4px;line-height:15px">3 months ago</div>
<div class="c em" style="left:1129px;top:505.4px;line-height:15px">Empty</div>
<div class="c" style="left:1214px;top:505.4px;line-height:15px">Active</div>
<div class="c em" style="left:1403px;top:505.4px;line-height:15px">Empty</div>
<div class="c em" style="left:1470px;top:505.4px;line-height:15px">Empty</div>
<div class="c gr" style="right:377px;top:505.4px;line-height:15px">N/A</div>
<div class="c gr" style="right:298.5px;top:505.4px;line-height:15px">N/A</div>
<div class="c em" style="left:1717px;top:505.4px;line-height:15px">Empty</div>
<svg class="abs" style="left:1850px;top:504.4px" width="13" height="13" viewBox="0 0 13 13"><rect x="3.5" y="0.5" width="9" height="9" rx="2" fill="none" stroke="#c4bfd6" stroke-width="1"/><rect x="0.5" y="3.5" width="9" height="9" rx="2" fill="#c9c4da"/></svg>
<div class="c" style="left:1868px;top:505.4px;line-height:15px;color:#383c3a">120211593565980673</div>
<div class="row" style="top:526px;height:32px;background:#fbe1d8"></div>
<div class="abs" style="left:69px;top:534.3px;width:15px;height:15px;border-radius:3px;background:#e6dcfb"></div>
<div class="c b" style="left:89px;top:537.3px;line-height:15px"><span style="letter-spacing:-0.68px">MM-Box-Woman-Year-preview-comments – Copy</span><span style="-webkit-text-stroke:0.3px #c9d0cd;color:#c9d0cd;margin-left:4px">120214924870610673</span></div>
<div class="c b" style="right:1475.0px;top:537.3px;line-height:15px">44</div>
<div class="c gr" style="right:1401.0px;top:537.3px;line-height:15px">0</div>
<div class="c b" style="right:1341.0px;top:537.3px;line-height:15px">11.26%</div>
<div class="c b" style="right:1282.0px;top:537.3px;line-height:15px">8.32%</div>
<div class="c gr" style="right:1223.0px;top:537.3px;line-height:15px">0.00%</div>
<div class="c b" style="right:1163.0px;top:537.3px;line-height:15px">$37.06</div>
<div class="c b" style="right:1104.0px;top:537.3px;line-height:15px">$0.33</div>
<div class="c b" style="right:1044.5px;top:537.3px;line-height:15px">$3.96</div>
<div class="c gr" style="right:984.5px;top:537.3px;line-height:15px">$0.00</div>
<div class="c" style="left:1031px;top:537.3px;line-height:15px">3 months ago</div>
<div class="c em" style="left:1129px;top:537.3px;line-height:15px">Empty</div>
<div class="c" style="left:1214px;top:537.3px;line-height:15px">Active</div>
<div class="c em" style="left:1403px;top:537.3px;line-height:15px">Empty</div>
<div class="c em" style="left:1470px;top:537.3px;line-height:15px">Empty</div>
<div class="c gr" style="right:377px;top:537.3px;line-height:15px">N/A</div>
<div class="c gr" style="right:298.5px;top:537.3px;line-height:15px">N/A</div>
<div class="c em" style="left:1717px;top:537.3px;line-height:15px">Empty</div>
<svg class="abs" style="left:1850px;top:536.3px" width="13" height="13" viewBox="0 0 13 13"><rect x="3.5" y="0.5" width="9" height="9" rx="2" fill="none" stroke="#c4bfd6" stroke-width="1"/><rect x="0.5" y="3.5" width="9" height="9" rx="2" fill="#c9c4da"/></svg>
<div class="c" style="left:1868px;top:537.3px;line-height:15px;color:#383c3a">120214924870610673</div>
<div class="row" style="top:558px;height:32px;background:#d0f8db"></div>
<svg class="abs" style="left:50px;top:566.1px" width="15" height="15"><rect width="15" height="15" rx="3" fill="#7a4cf4"/><path d="M4 6 H11 L7.5 9.5Z" fill="#fff"/></svg>
<div class="c b" style="left:69px;top:569.1px;line-height:15px"><span style="letter-spacing:-0.68px">ADSET-Woman-7-1-1 -45+</span><span style="-webkit-text-stroke:0.3px #c9d0cd;color:#c9d0cd;margin-left:4px">120211366486020673</span></div>
<div class="c gr" style="right:1475.0px;top:569.1px;line-height:15px">0</div>
<div class="c gr" style="right:1401.0px;top:569.1px;line-height:15px">0</div>
<div class="c gr" style="right:1341.0px;top:569.1px;line-height:15px">0.00%</div>
<div class="c gr" style="right:1282.0px;top:569.1px;line-height:15px">0.00%</div>
<div class="c gr" style="right:1223.0px;top:569.1px;line-height:15px">0.00%</div>
<div class="c gr" style="right:1163.0px;top:569.1px;line-height:15px">$0.00</div>
<div class="c gr" style="right:1104.0px;top:569.1px;line-height:15px">$0.00</div>
<div class="c gr" style="right:1044.5px;top:569.1px;line-height:15px">$0.00</div>
<div class="c gr" style="right:984.5px;top:569.1px;line-height:15px">$0.00</div>
<div class="c" style="left:1031px;top:569.1px;line-height:15px">3 months ago</div>
<div class="c em" style="left:1129px;top:569.1px;line-height:15px">Empty</div>
<div class="c" style="left:1214px;top:569.1px;line-height:15px">Active</div>
<div class="c em" style="left:1403px;top:569.1px;line-height:15px">Empty</div>
<div class="c em" style="left:1470px;top:569.1px;line-height:15px">Empty</div>
<div class="c gr" style="right:377px;top:569.1px;line-height:15px">N/A</div>
<div class="c gr" style="right:298.5px;top:569.1px;line-height:15px">N/A</div>
<div class="c em" style="left:1717px;top:569.1px;line-height:15px">Empty</div>
<svg class="abs" style="left:1850px;top:568.1px" width="13" height="13" viewBox="0 0 13 13"><rect x="3.5" y="0.5" width="9" height="9" rx="2" fill="none" stroke="#c4bfd6" stroke-width="1"/><rect x="0.5" y="3.5" width="9" height="9" rx="2" fill="#c9c4da"/></svg>
<div class="c" style="left:1868px;top:569.1px;line-height:15px;color:#383c3a">120211366486020673</div>
<div class="row" style="top:590px;height:32px;background:#d0f8db"></div>
<div class="abs" style="left:69px;top:598.0px;width:15px;height:15px;border-radius:3px;background:#e6dcfb"></div>
<div class="c b" style="left:89px;top:601.0px;line-height:15px"><span style="letter-spacing:-0.68px">MM-Box-Woman-Year-preview-LearnMore</span><span style="-webkit-text-stroke:0.3px #c9d0cd;color:#c9d0cd;margin-left:4px">120211366485970673</span></div>
<div class="c gr" style="right:1475.0px;top:601.0px;line-height:15px">0</div>
<div class="c gr" style="right:1401.0px;top:601.0px;line-height:15px">0</div>
<div class="c gr" style="right:1341.0px;top:601.0px;line-height:15px">0.00%</div>
<div class="c gr" style="right:1282.0px;top:601.0px;line-height:15px">0.00%</div>
<div class="c gr" style="right:1223.0px;top:601.0px;line-height:15px">0.00%</div>
<div class="c gr" style="right:1163.0px;top:601.0px;line-height:15px">$0.00</div>
<div class="c gr" style="right:1104.0px;top:601.0px;line-height:15px">$0.00</div>
<div class="c gr" style="right:1044.5px;top:601.0px;line-height:15px">$0.00</div>
<div class="c gr" style="right:984.5px;top:601.0px;line-height:15px">$0.00</div>
<div class="c" style="left:1031px;top:601.0px;line-height:15px">3 months ago</div>
<div class="c em" style="left:1129px;top:601.0px;line-height:15px">Empty</div>
<div class="c" style="left:1214px;top:601.0px;line-height:15px">Active</div>
<div class="c em" style="left:1403px;top:601.0px;line-height:15px">Empty</div>
<div class="c em" style="left:1470px;top:601.0px;line-height:15px">Empty</div>
<div class="c gr" style="right:377px;top:601.0px;line-height:15px">N/A</div>
<div class="c gr" style="right:298.5px;top:601.0px;line-height:15px">N/A</div>
<div class="c em" style="left:1717px;top:601.0px;line-height:15px">Empty</div>
<svg class="abs" style="left:1850px;top:600.0px" width="13" height="13" viewBox="0 0 13 13"><rect x="3.5" y="0.5" width="9" height="9" rx="2" fill="none" stroke="#c4bfd6" stroke-width="1"/><rect x="0.5" y="3.5" width="9" height="9" rx="2" fill="#c9c4da"/></svg>
<div class="c" style="left:1868px;top:601.0px;line-height:15px;color:#383c3a">120211366485970673</div>
<div class="row" style="top:622px;height:32px;background:#d0f8db"></div>
<svg class="abs" style="left:26px;top:629.9px" width="15" height="15"><rect width="15" height="15" rx="3" fill="#bba9f7"/><path d="M6 4 V11 L9.5 7.5Z" fill="#fff"/></svg>
<svg class="abs" style="left:46px;top:632.9px" width="15" height="10" viewBox="0 0 16 10"><path d="M1.5 8.5 C0 6 1.5 1.3 4 1.3 C6.5 1.3 8.5 8.5 11.5 8.5 C14 8.5 15 6.5 14.5 4.5 C14 1.5 11 1 8 5.5 C6 8.5 3 9.5 1.5 8.5Z" fill="none" stroke="#3a5ad6" stroke-width="1.5"/></svg>
<div class="c b" style="left:65px;top:632.9px;line-height:15px"><span style="letter-spacing:-0.68px">US-EN: M&amp;Ms [BG-B] – Copy</span><span style="-webkit-text-stroke:0.3px #c9d0cd;color:#c9d0cd;margin-left:4px">120214992734620673</span></div>
<div class="c b" style="right:1475.0px;top:632.9px;line-height:15px">6</div>
<div class="c gr" style="right:1401.0px;top:632.9px;line-height:15px">0</div>
<div class="c b" style="right:1341.0px;top:632.9px;line-height:15px">8.76%</div>
<div class="c b" style="right:1282.0px;top:632.9px;line-height:15px">3.00%</div>
<div class="c gr" style="right:1223.0px;top:632.9px;line-height:15px">0.00%</div>
<div class="c b" style="right:1163.0px;top:632.9px;line-height:15px">$23.37</div>
<div class="c b" style="right:1104.0px;top:632.9px;line-height:15px">$0.27</div>
<div class="c b" style="right:1044.5px;top:632.9px;line-height:15px">$8.90</div>
<div class="c gr" style="right:984.5px;top:632.9px;line-height:15px">$0.00</div>
<div class="c" style="left:1031px;top:632.9px;line-height:15px">3 months ago</div>
<div class="c em" style="left:1129px;top:632.9px;line-height:15px">Empty</div>
<div class="c" style="left:1214px;top:632.9px;line-height:15px">Active</div>
<div class="c em" style="left:1403px;top:632.9px;line-height:15px">Empty</div>
<div class="c em" style="left:1470px;top:632.9px;line-height:15px">Empty</div>
<div class="c gr" style="right:377px;top:632.9px;line-height:15px">N/A</div>
<div class="c gr" style="right:298.5px;top:632.9px;line-height:15px">N/A</div>
<div class="c em" style="left:1717px;top:632.9px;line-height:15px">Empty</div>
<svg class="abs" style="left:1850px;top:631.9px" width="13" height="13" viewBox="0 0 13 13"><rect x="3.5" y="0.5" width="9" height="9" rx="2" fill="none" stroke="#c4bfd6" stroke-width="1"/><rect x="0.5" y="3.5" width="9" height="9" rx="2" fill="#c9c4da"/></svg>
<div class="c" style="left:1868px;top:632.9px;line-height:15px;color:#383c3a">120214992734620673</div>
<div class="row" style="top:654px;height:32px;background:#d0f8db"></div>
<svg class="abs" style="left:7px;top:661.7px" width="15" height="15"><rect width="15" height="15" rx="3" fill="#5a22f0"/><path d="M6 4 V11 L9.5 7.5Z" fill="#fff"/></svg>
<svg class="abs" style="left:27px;top:663.2px" width="13" height="13"><circle cx="6.5" cy="6.5" r="6.5" fill="#f26b1c"/><path d="M4.5 4.5 L8.5 8.5 M8.5 4.5 L4.5 8.5" stroke="#ffd0b0" stroke-width="1"/></svg>
<div class="c b" style="left:46px;top:664.7px;line-height:15px"><span style="letter-spacing:-0.68px">szfk-BRI-tarahonich-D</span><span style="-webkit-text-stroke:0.3px #c9d0cd;color:#c9d0cd;margin-left:4px">1098762878112116</span></div>
<div class="c b" style="right:1475.0px;top:664.7px;line-height:15px">165</div>
<div class="c gr" style="right:1401.0px;top:664.7px;line-height:15px">0</div>
<div class="c b" style="right:1341.0px;top:664.7px;line-height:15px">7.90%</div>
<div class="c b" style="right:1282.0px;top:664.7px;line-height:15px">7.46%</div>
<div class="c gr" style="right:1223.0px;top:664.7px;line-height:15px">0.00%</div>
<div class="c b" style="right:1163.0px;top:664.7px;line-height:15px">$20.10</div>
<div class="c b" style="right:1104.0px;top:664.7px;line-height:15px">$0.25</div>
<div class="c b" style="right:1044.5px;top:664.7px;line-height:15px">$3.41</div>
<div class="c gr" style="right:984.5px;top:664.7px;line-height:15px">$0.00</div>
<div class="c" style="left:1031px;top:664.7px;line-height:15px">3 months ago</div>
<div class="c b" style="left:1129px;top:664.7px;line-height:15px">Default</div>
<svg class="abs" style="left:1215px;top:663.2px" width="13" height="13"><circle cx="6.5" cy="6.5" r="6.5" fill="#13c65a"/><path d="M3.7 6.8 L5.7 8.7 L9.3 4.8" stroke="#e0ffe8" stroke-width="1.3" fill="none"/></svg>
<div class="c b" style="left:1233px;top:664.7px;line-height:15px">Active</div>
<svg class="abs" style="left:1297px;top:663.2px" width="13" height="13"><circle cx="6.5" cy="6.5" r="6.5" fill="#13c65a"/><path d="M3.7 6.8 L5.7 8.7 L9.3 4.8" stroke="#e0ffe8" stroke-width="1.3" fill="none"/></svg>
<div class="c b" style="left:1315px;top:664.7px;line-height:15px">None</div>
<div class="c" style="left:1403px;top:664.7px;line-height:15px">USD</div>
<div class="c" style="left:1470px;top:664.7px;line-height:15px">UTC +03:00</div>
<div class="c b" style="right:377px;top:664.7px;line-height:15px">$48,250.01</div>
<div class="c b" style="right:298.5px;top:664.7px;line-height:15px">$1,266.66</div>
<div class="c" style="left:1717px;top:664.7px;line-height:15px">monthly invoicing</div>
<svg class="abs" style="left:1850px;top:663.7px" width="13" height="13" viewBox="0 0 13 13"><rect x="3.5" y="0.5" width="9" height="9" rx="2" fill="none" stroke="#c4bfd6" stroke-width="1"/><rect x="0.5" y="3.5" width="9" height="9" rx="2" fill="#c9c4da"/></svg>
<div class="c" style="left:1868px;top:664.7px;line-height:15px;color:#383c3a">1098762878112116</div>
<div class="row" style="top:686px;height:32px;background:#d0f8db"></div>
<svg class="abs" style="left:7px;top:693.6px" width="15" height="15"><rect width="15" height="15" rx="3" fill="#5a22f0"/><path d="M6 4 V11 L9.5 7.5Z" fill="#fff"/></svg>
<svg class="abs" style="left:27px;top:695.1px" width="13" height="13"><circle cx="6.5" cy="6.5" r="6.5" fill="#f26b1c"/><path d="M4.5 4.5 L8.5 8.5 M8.5 4.5 L4.5 8.5" stroke="#ffd0b0" stroke-width="1"/></svg>
<div class="c b" style="left:46px;top:696.6px;line-height:15px"><span style="letter-spacing:-0.68px">szfk-BRI-tarahonich-E</span><span style="-webkit-text-stroke:0.3px #c9d0cd;color:#c9d0cd;margin-left:4px">419461940565266</span></div>
<div class="c b" style="right:1475.0px;top:696.6px;line-height:15px">34</div>
<div class="c gr" style="right:1401.0px;top:696.6px;line-height:15px">0</div>
<div class="c b" style="right:1341.0px;top:696.6px;line-height:15px">7.17%</div>
<div class="c b" style="right:1282.0px;top:696.6px;line-height:15px">5.66%</div>
<div class="c gr" style="right:1223.0px;top:696.6px;line-height:15px">0.00%</div>
<div class="c b" style="right:1163.0px;top:696.6px;line-height:15px">$19.03</div>
<div class="c b" style="right:1104.0px;top:696.6px;line-height:15px">$0.27</div>
<div class="c b" style="right:1044.5px;top:696.6px;line-height:15px">$4.69</div>
<div class="c gr" style="right:984.5px;top:696.6px;line-height:15px">$0.00</div>
<div class="c" style="left:1031px;top:696.6px;line-height:15px">3 months ago</div>
<div class="c b" style="left:1129px;top:696.6px;line-height:15px">Default</div>
<svg class="abs" style="left:1215px;top:695.1px" width="13" height="13"><circle cx="6.5" cy="6.5" r="6.5" fill="#13c65a"/><path d="M3.7 6.8 L5.7 8.7 L9.3 4.8" stroke="#e0ffe8" stroke-width="1.3" fill="none"/></svg>
<div class="c b" style="left:1233px;top:696.6px;line-height:15px">Active</div>
<svg class="abs" style="left:1297px;top:695.1px" width="13" height="13"><circle cx="6.5" cy="6.5" r="6.5" fill="#13c65a"/><path d="M3.7 6.8 L5.7 8.7 L9.3 4.8" stroke="#e0ffe8" stroke-width="1.3" fill="none"/></svg>
<div class="c b" style="left:1315px;top:696.6px;line-height:15px">None</div>
<div class="c" style="left:1403px;top:696.6px;line-height:15px">USD</div>
<div class="c" style="left:1470px;top:696.6px;line-height:15px">UTC +03:00</div>
<div class="c b" style="right:377px;top:696.6px;line-height:15px">$77,093.01</div>
<div class="c b" style="right:298.5px;top:696.6px;line-height:15px">$454.44</div>
<div class="c" style="left:1717px;top:696.6px;line-height:15px">monthly invoicing</div>
<svg class="abs" style="left:1850px;top:695.6px" width="13" height="13" viewBox="0 0 13 13"><rect x="3.5" y="0.5" width="9" height="9" rx="2" fill="none" stroke="#c4bfd6" stroke-width="1"/><rect x="0.5" y="3.5" width="9" height="9" rx="2" fill="#c9c4da"/></svg>
<div class="c" style="left:1868px;top:696.6px;line-height:15px;color:#383c3a">419461940565266</div>
<div class="row" style="top:718px;height:31px;background:#d0f8db"></div>
<svg class="abs" style="left:7px;top:725.5px" width="15" height="15"><rect width="15" height="15" rx="3" fill="#5a22f0"/><path d="M6 4 V11 L9.5 7.5Z" fill="#fff"/></svg>
<svg class="abs" style="left:27px;top:727.0px" width="13" height="13"><circle cx="6.5" cy="6.5" r="6.5" fill="#f26b1c"/><path d="M4.5 4.5 L8.5 8.5 M8.5 4.5 L4.5 8.5" stroke="#ffd0b0" stroke-width="1"/></svg>
<div class="c b" style="left:46px;top:728.5px;line-height:15px"><span style="letter-spacing:-0.68px">Dương Bích Phượng</span><span style="-webkit-text-stroke:0.3px #c9d0cd;color:#c9d0cd;margin-left:4px">228856169948949</span></div>
<div class="c gr" style="right:1475.0px;top:728.5px;line-height:15px">0</div>
<div class="c gr" style="right:1401.0px;top:728.5px;line-height:15px">0</div>
<div class="c gr" style="right:1341.0px;top:728.5px;line-height:15px">0.00%</div>
<div class="c gr" style="right:1282.0px;top:728.5px;line-height:15px">0.00%</div>
<div class="c gr" style="right:1223.0px;top:728.5px;line-height:15px">0.00%</div>
<div class="c gr" style="right:1163.0px;top:728.5px;line-height:15px">$0.00</div>
<div class="c gr" style="right:1104.0px;top:728.5px;line-height:15px">$0.00</div>
<div class="c gr" style="right:1044.5px;top:728.5px;line-height:15px">$0.00</div>
<div class="c gr" style="right:984.5px;top:728.5px;line-height:15px">$0.00</div>
<div class="c" style="left:1031px;top:728.5px;line-height:15px">3 months ago</div>
<div class="c b" style="left:1129px;top:728.5px;line-height:15px">Default</div>
<svg class="abs" style="left:1215px;top:727.0px" width="13" height="13"><circle cx="6.5" cy="6.5" r="6.5" fill="#13c65a"/><path d="M3.7 6.8 L5.7 8.7 L9.3 4.8" stroke="#e0ffe8" stroke-width="1.3" fill="none"/></svg>
<div class="c b" style="left:1233px;top:728.5px;line-height:15px">Active</div>
<svg class="abs" style="left:1297px;top:727.0px" width="13" height="13"><circle cx="6.5" cy="6.5" r="6.5" fill="#13c65a"/><path d="M3.7 6.8 L5.7 8.7 L9.3 4.8" stroke="#e0ffe8" stroke-width="1.3" fill="none"/></svg>
<div class="c b" style="left:1315px;top:728.5px;line-height:15px">None</div>
<div class="c" style="left:1403px;top:728.5px;line-height:15px">VND</div>
<div class="c" style="left:1470px;top:728.5px;line-height:15px">UTC +05:00</div>
<div class="c b" style="right:377px;top:728.5px;line-height:15px">$0.00</div>
<div class="c b" style="right:298.5px;top:728.5px;line-height:15px">$0.00</div>
<div class="c em" style="left:1717px;top:728.5px;line-height:15px">Empty</div>
<svg class="abs" style="left:1850px;top:727.5px" width="13" height="13" viewBox="0 0 13 13"><rect x="3.5" y="0.5" width="9" height="9" rx="2" fill="none" stroke="#c4bfd6" stroke-width="1"/><rect x="0.5" y="3.5" width="9" height="9" rx="2" fill="#c9c4da"/></svg>
<div class="c" style="left:1868px;top:728.5px;line-height:15px;color:#383c3a">228856169948949</div>
<div class="abs" style="left:0;top:271px;width:1999px;height:1px;background:rgba(255,255,255,0.3)"></div>
<div class="abs" style="left:0;top:303px;width:1999px;height:1px;background:rgba(255,255,255,0.3)"></div>
<div class="abs" style="left:0;top:335px;width:1999px;height:1px;background:rgba(255,255,255,0.3)"></div>
<div class="abs" style="left:0;top:367px;width:1999px;height:1px;background:rgba(255,255,255,0.3)"></div>
<div class="abs" style="left:0;top:399px;width:1999px;height:1px;background:rgba(255,255,255,0.3)"></div>
<div class="abs" style="left:0;top:431px;width:1999px;height:1px;background:rgba(255,255,255,0.3)"></div>
<div class="abs" style="left:0;top:463px;width:1999px;height:1px;background:rgba(255,255,255,0.3)"></div>
<div class="abs" style="left:0;top:494px;width:1999px;height:1px;background:rgba(255,255,255,0.3)"></div>
<div class="abs" style="left:0;top:526px;width:1999px;height:1px;background:rgba(255,255,255,0.3)"></div>
<div class="abs" style="left:0;top:558px;width:1999px;height:1px;background:rgba(255,255,255,0.3)"></div>
<div class="abs" style="left:0;top:590px;width:1999px;height:1px;background:rgba(255,255,255,0.3)"></div>
<div class="abs" style="left:0;top:622px;width:1999px;height:1px;background:rgba(255,255,255,0.3)"></div>
<div class="abs" style="left:0;top:654px;width:1999px;height:1px;background:rgba(255,255,255,0.3)"></div>
<div class="abs" style="left:0;top:686px;width:1999px;height:1px;background:rgba(255,255,255,0.3)"></div>
<div class="abs" style="left:0;top:718px;width:1999px;height:1px;background:rgba(255,255,255,0.3)"></div>
<div class="abs" style="left:501.5px;top:239px;width:1px;height:509px;background:rgba(255,255,255,0.22)"></div>
<div class="abs" style="left:532px;top:239px;width:1px;height:509px;background:rgba(255,255,255,0.22)"></div>
<div class="abs" style="left:606px;top:239px;width:1px;height:509px;background:rgba(255,255,255,0.22)"></div>
<div class="abs" style="left:666px;top:239px;width:1px;height:509px;background:rgba(255,255,255,0.22)"></div>
<div class="abs" style="left:725px;top:239px;width:1px;height:509px;background:rgba(255,255,255,0.22)"></div>
<div class="abs" style="left:784px;top:239px;width:1px;height:509px;background:rgba(255,255,255,0.22)"></div>
<div class="abs" style="left:844px;top:239px;width:1px;height:509px;background:rgba(255,255,255,0.22)"></div>
<div class="abs" style="left:903px;top:239px;width:1px;height:509px;background:rgba(255,255,255,0.22)"></div>
<div class="abs" style="left:962.5px;top:239px;width:1px;height:509px;background:rgba(255,255,255,0.22)"></div>
<div class="abs" style="left:1022.5px;top:239px;width:1px;height:509px;background:rgba(255,255,255,0.22)"></div>
<div class="abs" style="left:1120px;top:239px;width:1px;height:509px;background:rgba(255,255,255,0.22)"></div>
<div class="abs" style="left:1205px;top:239px;width:1px;height:509px;background:rgba(255,255,255,0.22)"></div>
<div class="abs" style="left:1287.5px;top:239px;width:1px;height:509px;background:rgba(255,255,255,0.22)"></div>
<div class="abs" style="left:1394.5px;top:239px;width:1px;height:509px;background:rgba(255,255,255,0.22)"></div>
<div class="abs" style="left:1461.5px;top:239px;width:1px;height:509px;background:rgba(255,255,255,0.22)"></div>
<div class="abs" style="left:1546.5px;top:239px;width:1px;height:509px;background:rgba(255,255,255,0.22)"></div>
<div class="abs" style="left:1630px;top:239px;width:1px;height:509px;background:rgba(255,255,255,0.22)"></div>
<div class="abs" style="left:1708.5px;top:239px;width:1px;height:509px;background:rgba(255,255,255,0.22)"></div>
<div class="abs" style="left:1840.5px;top:239px;width:1px;height:509px;background:rgba(255,255,255,0.22)"></div>
<div class="row" style="top:748px;height:32px;background:#e8e9f4"></div>
<div class="abs" style="left:501.5px;top:748px;width:1px;height:32px;background:#f6f6fb"></div>
<div class="abs" style="left:532px;top:748px;width:1px;height:32px;background:#f6f6fb"></div>
<div class="abs" style="left:606px;top:748px;width:1px;height:32px;background:#f6f6fb"></div>
<div class="abs" style="left:666px;top:748px;width:1px;height:32px;background:#f6f6fb"></div>
<div class="abs" style="left:725px;top:748px;width:1px;height:32px;background:#f6f6fb"></div>
<div class="abs" style="left:784px;top:748px;width:1px;height:32px;background:#f6f6fb"></div>
<div class="abs" style="left:844px;top:748px;width:1px;height:32px;background:#f6f6fb"></div>
<div class="abs" style="left:903px;top:748px;width:1px;height:32px;background:#f6f6fb"></div>
<div class="abs" style="left:962.5px;top:748px;width:1px;height:32px;background:#f6f6fb"></div>
<div class="abs" style="left:1022.5px;top:748px;width:1px;height:32px;background:#f6f6fb"></div>
<div class="abs" style="left:1120px;top:748px;width:1px;height:32px;background:#f6f6fb"></div>
<div class="abs" style="left:1205px;top:748px;width:1px;height:32px;background:#f6f6fb"></div>
<div class="abs" style="left:1287.5px;top:748px;width:1px;height:32px;background:#f6f6fb"></div>
<div class="abs" style="left:1394.5px;top:748px;width:1px;height:32px;background:#f6f6fb"></div>
<div class="abs" style="left:1461.5px;top:748px;width:1px;height:32px;background:#f6f6fb"></div>
<div class="abs" style="left:1546.5px;top:748px;width:1px;height:32px;background:#f6f6fb"></div>
<div class="abs" style="left:1630px;top:748px;width:1px;height:32px;background:#f6f6fb"></div>
<div class="abs" style="left:1708.5px;top:748px;width:1px;height:32px;background:#f6f6fb"></div>
<div class="abs" style="left:1840.5px;top:748px;width:1px;height:32px;background:#f6f6fb"></div>
<div class="c m" style="right:1475.0px;top:759.0px;line-height:15px">118</div>
<div class="c m" style="right:1401.0px;top:759.0px;line-height:15px">0</div>
<div class="c m" style="right:1341.0px;top:759.0px;line-height:15px">8.33%</div>
<div class="c m" style="right:1282.0px;top:759.0px;line-height:15px">8.07%</div>
<div class="c gr" style="right:1223.0px;top:759.0px;line-height:15px">0.00%</div>
<div class="c m" style="right:1163.0px;top:759.0px;line-height:15px">$24.03</div>
<div class="c m" style="right:1104.0px;top:759.0px;line-height:15px">$0.29</div>
<div class="c m" style="right:1044.5px;top:759.0px;line-height:15px">$3.57</div>
<div class="c m" style="right:984.5px;top:759.0px;line-height:15px">$0.00</div>
<div class="c m" style="right:377px;top:759.0px;line-height:15px">$0.00</div>
<div class="c m" style="right:298.5px;top:759.0px;line-height:15px">$0.00</div>
<svg class="abs" style="left:1428px;top:206px" width="17" height="21" viewBox="0 0 17 21"><path d="M6 1.5 C6.8 1 7.8 1.3 7.8 2.5 V9 L8.5 9 C9 8.3 10.2 8.4 10.5 9.2 C11 8.6 12.2 8.7 12.5 9.6 C13.2 9.2 14.5 9.5 14.6 10.6 V15 C14.6 18 12.5 20 9.5 20 H8.5 C6.5 20 5.5 19 4.5 17.5 L1.5 13 C1 12 2 11 3 11.6 L6 13.5 V2.5 C6 2 6 1.7 6 1.5Z" fill="#ffffff" stroke="#8a8a90" stroke-width="1.1"/></svg>
<div class="abs" style="left:167px;top:842px;width:9px;height:9px;border-radius:50%;background:#ddd5fd"></div>
<div class="abs" style="left:10px;top:1037px;width:26px;height:26px;border-radius:50%;background:#222425"></div>
<svg class="abs" style="left:14px;top:1041px" width="18" height="18" viewBox="0 0 18 18"><path d="M6.5 12.5 L12.5 6.5 L14 8 L8 14 Z" stroke="#3a7a55" stroke-width="1.1" fill="none"/><path d="M12.5 6.5 L13.2 5.8 L14.7 7.3 L14 8" stroke="#1fd06a" stroke-width="1.2" fill="none"/><path d="M5.5 14.3 H13" stroke="#3a7a55" stroke-width="1.2"/><path d="M5.5 14.3 H8" stroke="#1fd06a" stroke-width="1.4"/></svg>
<div class="abs" style="left:1909px;top:1033px;width:63px;height:63px;border-radius:50%;background:#3b30fa"></div>
<svg class="abs" style="left:1909px;top:1033px" width="63" height="63" viewBox="0 0 63 63"><circle cx="31.5" cy="23.2" r="6" fill="#fff"/><path d="M20.5 42.5 C22 29.5 41 29.5 42.5 42.5 C38 45.5 25 45.5 20.5 42.5Z" fill="#fff"/></svg>
<div class="abs" style="left:0;top:1099px;width:1999px;height:1px;background:#3d5a3a"></div>
</body></html>
